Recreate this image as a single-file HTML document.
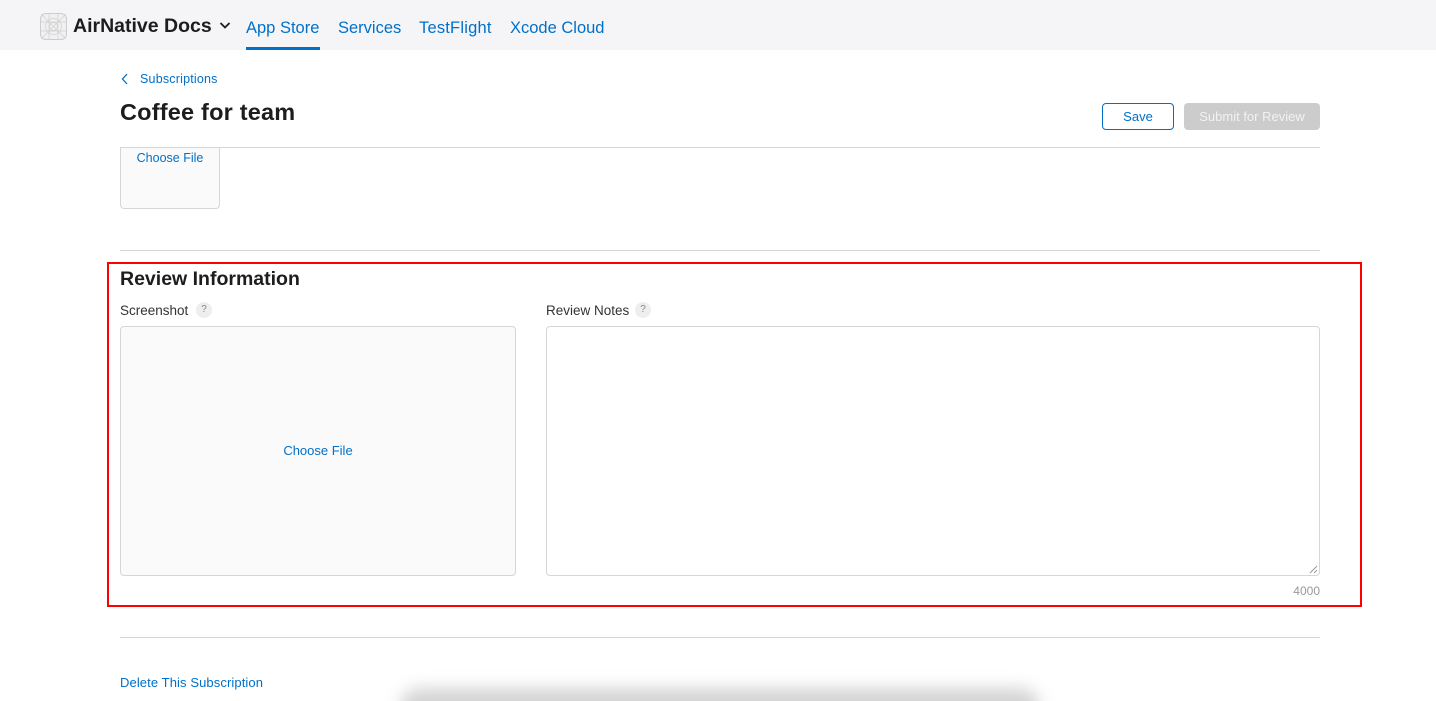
<!DOCTYPE html>
<html style="width:1436px;height:701px;overflow:hidden"><head><style>
*{box-sizing:border-box;margin:0;padding:0}
body{width:1436px;height:701px;overflow:hidden;background:#fff;font-family:"Liberation Sans",sans-serif;position:relative;color:#1d1d1f}
.a{position:absolute;white-space:nowrap}
.blue{color:#0070c9}
</style></head><body>
<div class="a" style="left:0;top:0;width:1436px;height:50px;background:#f5f5f7"></div>
<div class="a" style="left:40px;top:13px;width:27px;height:27px;border:1px solid #ccc;border-radius:6px;background:#f0f0f0">
<svg width="25" height="25" viewBox="0 0 25 25" style="position:absolute;left:0;top:0" stroke="#d0d0d0" fill="none" stroke-width="0.7"><circle cx="12.5" cy="12.5" r="8"/><circle cx="12.5" cy="12.5" r="4"/><path d="M0 0L25 25M25 0L0 25M8 0V25M17 0V25M0 8H25M0 17H25"/></svg></div>
<div class="a" style="left:73px;top:15px;font-size:19.5px;font-weight:bold;color:#1d1d1f">AirNative Docs</div>
<svg class="a" style="left:219px;top:21px" width="12" height="9" viewBox="0 0 12 9"><path d="M1.5 2L6 6.5L10.5 2" stroke="#1d1d1f" stroke-width="1.8" fill="none"/></svg>
<div class="a blue" style="left:246px;top:19px;font-size:16.5px">App Store</div>
<div class="a" style="left:246px;top:47px;width:74px;height:3px;background:#0070c9"></div>
<div class="a blue" style="left:338px;top:19px;font-size:16.5px">Services</div>
<div class="a blue" style="left:419px;top:19px;font-size:16.5px;letter-spacing:0.2px">TestFlight</div>
<div class="a blue" style="left:510px;top:19px;font-size:16.5px">Xcode Cloud</div>

<svg class="a" style="left:121px;top:73px" width="8" height="12" viewBox="0 0 8 12"><path d="M6 1L1.5 6L6 11" stroke="#0070c9" stroke-width="1.3" fill="none"/></svg>
<div class="a blue" style="left:140px;top:72px;font-size:12.5px;letter-spacing:0.2px">Subscriptions</div>
<div class="a" style="left:120px;top:99px;font-size:23.5px;font-weight:bold;letter-spacing:0.2px">Coffee for team</div>
<div class="a blue" style="left:1102px;top:103px;width:72px;height:27px;border:1px solid #0070c9;border-radius:4px;font-size:13px;text-align:center;line-height:25px">Save</div>
<div class="a" style="left:1184px;top:103px;width:136px;height:27px;background:#cccccc;border-radius:4px;font-size:13px;color:#f2f2f2;text-align:center;line-height:27px">Submit for Review</div>
<div class="a" style="left:120px;top:147px;width:1200px;height:1px;background:#d6d6d6"></div>

<div class="a" style="left:120px;top:148px;width:100px;height:61px;border:1px solid #d6d6d6;border-top:none;border-radius:0 0 4px 4px;background:#fafafa"></div>
<div class="a blue" style="left:120px;top:151px;width:100px;text-align:center;font-size:12.5px">Choose File</div>
<div class="a" style="left:120px;top:250px;width:1200px;height:1px;background:#d6d6d6"></div>

<div class="a" style="left:107px;top:262px;width:1255px;height:345px;border:2px solid #f00"></div>
<div class="a" style="left:120px;top:268px;font-size:19.5px;font-weight:bold">Review Information</div>
<div class="a" style="left:120px;top:303px;font-size:13.5px;color:#333">Screenshot</div>
<div class="a" style="left:196px;top:302px;width:16px;height:16px;border-radius:50%;background:#eee;color:#888;font-size:10px;text-align:center;line-height:16px">?</div>
<div class="a" style="left:546px;top:303px;font-size:13.5px;color:#333">Review Notes</div>
<div class="a" style="left:635px;top:302px;width:16px;height:16px;border-radius:50%;background:#eee;color:#888;font-size:10px;text-align:center;line-height:16px">?</div>
<div class="a" style="left:120px;top:326px;width:396px;height:250px;border:1px solid #d6d6d6;border-radius:4px;background:#fafafa"></div>
<div class="a blue" style="left:120px;top:443px;width:396px;text-align:center;font-size:13px">Choose File</div>
<div class="a" style="left:546px;top:326px;width:774px;height:250px;border:1px solid #d6d6d6;border-radius:4px;background:#fff"></div>
<svg class="a" style="left:1309px;top:565px" width="9" height="9" viewBox="0 0 9 9"><path d="M1 8L8 1M5 8L8 5" stroke="#999" stroke-width="1"/></svg>
<div class="a" style="left:1280px;top:584px;width:40px;text-align:right;font-size:12px;color:#999">4000</div>

<div class="a" style="left:120px;top:637px;width:1200px;height:1px;background:#d6d6d6"></div>
<div class="a blue" style="left:120px;top:675px;font-size:13px;letter-spacing:0.1px">Delete This Subscription</div>
<div class="a" style="left:400px;top:688px;width:640px;height:40px;border-radius:30px;background:#d4d4d4;filter:blur(8px)"></div>
<div class="a" style="left:-6px;top:670px;width:10px;height:40px;border-left:2px solid #000;border-radius:0 0 0 10px"></div>
</body></html>
